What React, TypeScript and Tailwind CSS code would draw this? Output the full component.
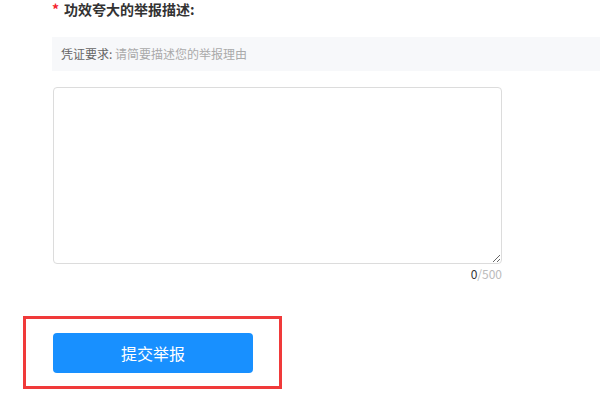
// Report form - description, evidence hint, submit
export default function App() {
  return (
    <div
      className="relative w-[600px] h-[400px] overflow-hidden bg-white"
      style={{ fontFamily: '"Microsoft YaHei", "Noto Sans CJK SC", "Noto Sans", sans-serif' }}
    >
      {/* Title */}
      <div className="flex items-center pl-[52px] h-[18px] leading-[18px] text-[14px] font-bold text-[#333]">
        <span className="text-[#f5222d] mr-[5px] font-bold">*</span>
        <span>功效夸大的举报描述:</span>
      </div>

      {/* Evidence hint */}
      <div className="mt-[19px] ml-[52px] h-[34px] pl-[9px] bg-[#f7f8fa] text-[12px] leading-[34px]">
        <span className="text-[#666]">凭证要求: </span>
        <span className="text-[#aaa]">请简要描述您的举报理由</span>
      </div>

      {/* Textarea */}
      <textarea
        className="block mt-[16px] ml-[53px] w-[449px] h-[177px] border border-[#dcdcdc] rounded-[4px] resize-y outline-none p-2 text-[12px]"
      />
      <div className="ml-[53px] w-[449px] mt-[1px] h-[18px] leading-[18px] text-right text-[12px]">
        <span className="text-[#333]">0</span>
        <span className="text-[#bbb]">/500</span>
      </div>

      {/* Submit */}
      <div className="mt-[33px] ml-[23px] w-[259px] h-[73px] border-[3px] border-[#f03a3a] pt-[14px] pl-[27px]">
        <button className="w-[200px] h-[40px] rounded-[4px] bg-[#1890ff] text-white text-[16px]">
          提交举报
        </button>
      </div>
    </div>
  )
}
